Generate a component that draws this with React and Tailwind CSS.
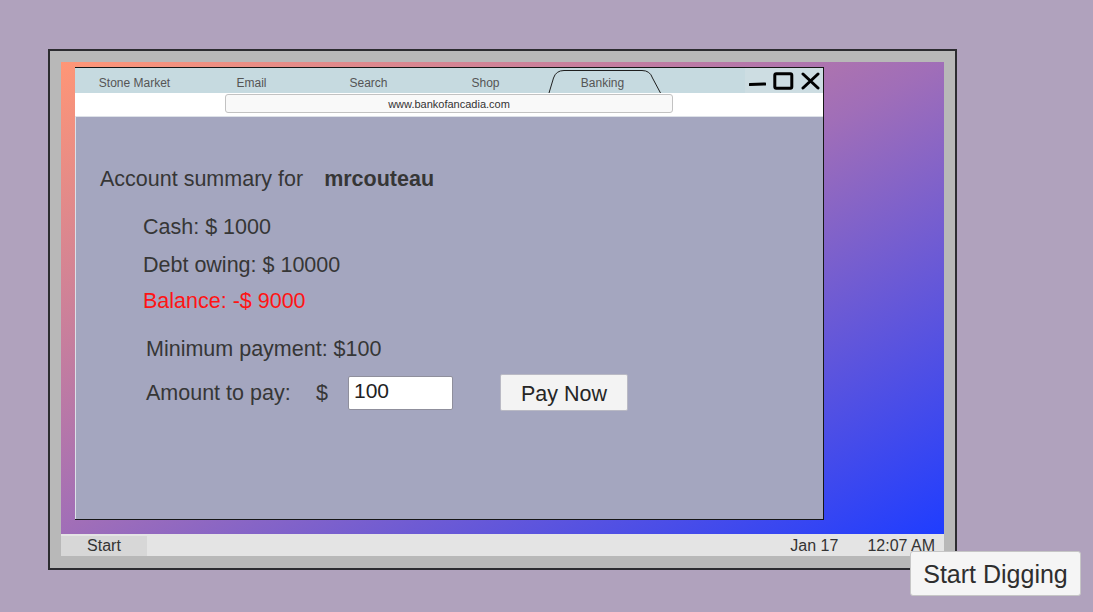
import { useState } from 'react'

const FONT = { fontFamily: '"Liberation Sans", Arial, sans-serif' }

const TABS = ['Stone Market', 'Email', 'Search', 'Shop', 'Banking']

function Tab({ label, active }) {
  return (
    <div className="relative w-[117px] h-full flex items-center justify-center pt-[4px] text-[12px] text-[#555]">
      {active && (
        <svg className="absolute inset-0" width="117" height="25" viewBox="0 0 117 25" fill="none">
          <path
            d="M5 25 L9.5 10 Q12 2.5 20 2.5 L98 2.5 Q106 2.5 108.5 10 L116.5 25"
            stroke="#1f1f1f"
            strokeWidth="1"
          />
        </svg>
      )}
      <span className="relative">{label}</span>
    </div>
  )
}

function WindowControls() {
  return (
    <div className="ml-auto h-full w-[78px] bg-[#cddde2] flex items-center gap-[7px] pl-[4px]">
      <svg width="17" height="18" viewBox="0 0 17 18">
        <path d="M1 12.5 L16 12" stroke="#000" strokeWidth="3" strokeLinecap="round" />
      </svg>
      <svg width="21" height="18" viewBox="0 0 21 18">
        <rect x="1.8" y="1.8" width="17" height="14.5" rx="1.5" stroke="#000" strokeWidth="3" fill="none" />
      </svg>
      <svg width="19" height="18" viewBox="0 0 19 18">
        <path d="M2 2 L17 16 M17 2 L2 16" stroke="#000" strokeWidth="3" strokeLinecap="round" />
      </svg>
    </div>
  )
}

function BankPage() {
  const [amount, setAmount] = useState('100')

  return (
    <div className="flex-1 bg-[#a4a6bf] border-t border-l border-[#dde1e8] pt-[50px] pl-[24px] text-[21.5px] leading-[24px] text-[#363636]">
      <div className="flex">
        <span>Account summary for</span>
        <span className="ml-[21px] font-bold">mrcouteau</span>
      </div>

      <div className="pl-[43px]">
        <p className="mt-[24px]">Cash: $ 1000</p>
        <p className="mt-[14px]">Debt owing: $ 10000</p>
        <p className="mt-[12px] text-[#ff1414]">Balance: -$ 9000</p>
      </div>

      <div className="pl-[46px]">
        <p className="mt-[24px]">Minimum payment: $100</p>

        <div className="mt-[13px] h-[37px] flex items-center">
          <span className="w-[170px]">Amount to pay:</span>
          <span className="w-[32px]">$</span>
          <input
            value={amount}
            onChange={e => setAmount(e.target.value)}
            className="w-[105px] h-[34px] bg-white border border-[#8f8f9c] rounded-[2px] pl-[5px] pb-[4px] text-[21px] text-[#222] outline-none"
            style={FONT}
          />
          <button
            className="ml-[47px] w-[128px] h-[37px] bg-[#f3f3f3] border border-[#b9b9c4] rounded-[2px] pt-[2px] text-[21.5px] text-[#262626]"
            style={FONT}
          >
            Pay Now
          </button>
        </div>
      </div>
    </div>
  )
}

export default function App() {
  return (
    <div className="relative w-[1093px] h-[612px] bg-[#b0a2bd] overflow-hidden" style={FONT}>
      {/* Monitor */}
      <div className="absolute left-[48px] top-[49px] w-[909px] h-[521px] bg-[#b8b8b8] border-2 border-[#2c2c30] pl-[11px] pt-[11px]">
        {/* Screen */}
        <div className="w-[883px] h-[472px] bg-[linear-gradient(to_bottom_right,#ff9676_0%,#a06eb8_50%,#1f3dff_100%)] pl-[14px] pt-[5px]">
          {/* Browser window */}
          <div className="w-[749px] h-[453px] flex flex-col bg-white border-t border-b border-r border-[#161616]">
            {/* Tabs */}
            <div className="h-[25px] bg-[#c6dae0] flex pl-[1px] shrink-0">
              {TABS.map(t => (
                <Tab key={t} label={t} active={t === 'Banking'} />
              ))}
              <WindowControls />
            </div>

            {/* Address bar */}
            <div className="h-[23px] shrink-0 bg-white pl-[150px] pt-[1px]">
              <div className="w-[448px] h-[19px] bg-[#f9f9f9] border border-[#c2c2c2] rounded-[3px] flex items-center justify-center pt-[2px] text-[11px] text-[#333]">
                www.bankofancadia.com
              </div>
            </div>

            <BankPage />
          </div>
        </div>

        {/* Taskbar */}
        <div className="w-[883px] h-[22px] bg-[#e4e4e4] flex items-center pt-[2px] text-[16px] text-[#333]">
          <div className="w-[86px] h-full bg-[#d7d7d7] flex items-center justify-center">Start</div>
          <span className="ml-auto">Jan 17</span>
          <span className="ml-[29px] mr-[9px]">12:07 AM</span>
        </div>
      </div>

      {/* Start Digging button */}
      <button
        className="absolute left-[910px] top-[551px] w-[171px] h-[45px] bg-[#f5f5f5] border border-[#c6c6c6] rounded-[3px] pt-[3px] text-[25px] text-[#2e2e2e]"
        style={FONT}
      >
        Start Digging
      </button>
    </div>
  )
}
